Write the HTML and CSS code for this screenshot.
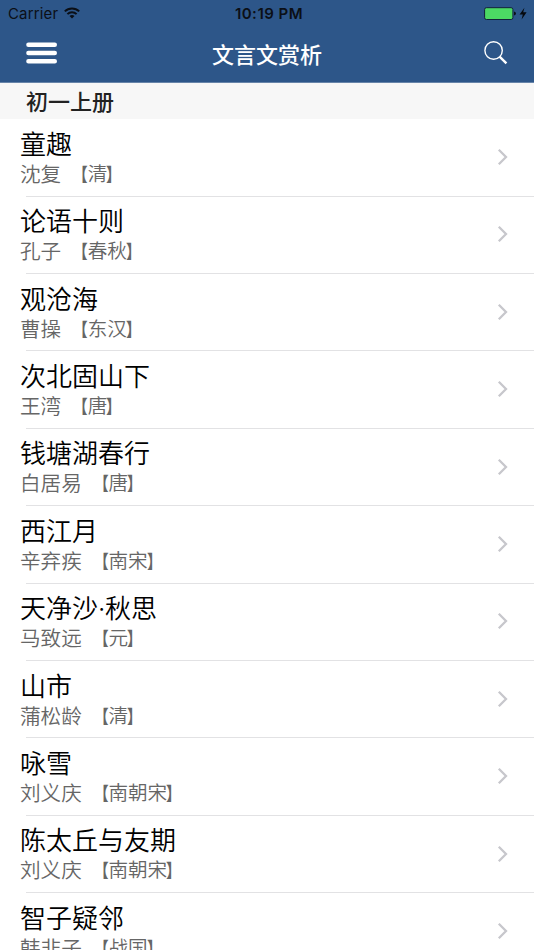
FILE: index.html
```html
<!DOCTYPE html>
<html lang="zh-CN">
<head>
<meta charset="utf-8">
<title>文言文赏析</title>
<link rel="stylesheet" href="styles.css">
</head>
<body>
<header class="header">
  <div class="status">
    <div class="carrier"><span>Carrier</span>
      <svg class="wifi" width="16" height="12" viewBox="0 0 16 12" fill="none" stroke="#0b0f16" stroke-width="2"><path d="M.8 4.4a10.3 10.3 0 0 1 14.4 0M3.4 7.1a6.6 6.6 0 0 1 9.2 0"/><path d="M8 11.6 5.5 9.1a3.6 3.6 0 0 1 5 0Z" fill="#0b0f16" stroke="none"/></svg>
    </div>
    <time class="time">10:19 PM</time>
    <svg class="battery" width="44" height="14" viewBox="0 0 44 14"><rect x=".6" y=".7" width="28.3" height="11.8" rx="1.8" fill="#4cd964" stroke="#12213a"/><path d="M30 4.6q2 .5 2 2t-2 2z" fill="#0b0f16"/><path d="M40.4.8 35.6 7.4h3.2l-1.2 5 5-7.1h-3.4z" fill="#05080d"/></svg>
  </div>
  <nav class="nav">
    <svg class="menu" width="32" height="22" viewBox="0 0 32 22" stroke="#fff" stroke-width="4.4" stroke-linecap="round"><path d="M2.4 2.7h26.4M2.4 11h26.4M2.4 19.3h26.4"/></svg>
    <h1 class="nav-title">文言文赏析</h1>
    <svg class="search" width="24" height="24" viewBox="0 0 24 24" fill="none" stroke="#fff"><circle cx="9.6" cy="9.5" r="8.7" stroke-width="1.4"/><path d="m15.6 15.7 6.8 6.6" stroke-width="2.4"/></svg>
  </nav>
</header>
<h2 class="section">初一上册</h2>
<ul class="list">
  <li class="row"><div class="info"><h3>童趣</h3><p><span class="author">沈复</span><span class="era"><i class="open">【</i>清<i class="close">】</i></span></p></div><svg class="chevron" viewBox="0 0 12 18"><path d="m1.8 1.8 7.2 7.2-7.2 7.2"/></svg></li>
  <li class="row"><div class="info"><h3>论语十则</h3><p><span class="author">孔子</span><span class="era"><i class="open">【</i>春秋<i class="close">】</i></span></p></div><svg class="chevron" viewBox="0 0 12 18"><path d="m1.8 1.8 7.2 7.2-7.2 7.2"/></svg></li>
  <li class="row"><div class="info"><h3>观沧海</h3><p><span class="author">曹操</span><span class="era"><i class="open">【</i>东汉<i class="close">】</i></span></p></div><svg class="chevron" viewBox="0 0 12 18"><path d="m1.8 1.8 7.2 7.2-7.2 7.2"/></svg></li>
  <li class="row"><div class="info"><h3>次北固山下</h3><p><span class="author">王湾</span><span class="era"><i class="open">【</i>唐<i class="close">】</i></span></p></div><svg class="chevron" viewBox="0 0 12 18"><path d="m1.8 1.8 7.2 7.2-7.2 7.2"/></svg></li>
  <li class="row"><div class="info"><h3>钱塘湖春行</h3><p><span class="author">白居易</span><span class="era"><i class="open">【</i>唐<i class="close">】</i></span></p></div><svg class="chevron" viewBox="0 0 12 18"><path d="m1.8 1.8 7.2 7.2-7.2 7.2"/></svg></li>
  <li class="row"><div class="info"><h3>西江月</h3><p><span class="author">辛弃疾</span><span class="era"><i class="open">【</i>南宋<i class="close">】</i></span></p></div><svg class="chevron" viewBox="0 0 12 18"><path d="m1.8 1.8 7.2 7.2-7.2 7.2"/></svg></li>
  <li class="row"><div class="info"><h3>天净沙<span class="dot">·</span>秋思</h3><p><span class="author">马致远</span><span class="era"><i class="open">【</i>元<i class="close">】</i></span></p></div><svg class="chevron" viewBox="0 0 12 18"><path d="m1.8 1.8 7.2 7.2-7.2 7.2"/></svg></li>
  <li class="row"><div class="info"><h3>山市</h3><p><span class="author">蒲松龄</span><span class="era"><i class="open">【</i>清<i class="close">】</i></span></p></div><svg class="chevron" viewBox="0 0 12 18"><path d="m1.8 1.8 7.2 7.2-7.2 7.2"/></svg></li>
  <li class="row"><div class="info"><h3>咏雪</h3><p><span class="author">刘义庆</span><span class="era"><i class="open">【</i>南朝宋<i class="close">】</i></span></p></div><svg class="chevron" viewBox="0 0 12 18"><path d="m1.8 1.8 7.2 7.2-7.2 7.2"/></svg></li>
  <li class="row"><div class="info"><h3>陈太丘与友期</h3><p><span class="author">刘义庆</span><span class="era"><i class="open">【</i>南朝宋<i class="close">】</i></span></p></div><svg class="chevron" viewBox="0 0 12 18"><path d="m1.8 1.8 7.2 7.2-7.2 7.2"/></svg></li>
  <li class="row"><div class="info"><h3>智子疑邻</h3><p><span class="author">韩非子</span><span class="era"><i class="open">【</i>战国<i class="close">】</i></span></p></div><svg class="chevron" viewBox="0 0 12 18"><path d="m1.8 1.8 7.2 7.2-7.2 7.2"/></svg></li>
</ul>
</body>
</html>
```
FILE: styles.css
```css
* { box-sizing: border-box; margin: 0; padding: 0; }
html, body { height: 100%; overflow: hidden; }
body {
  display: flex;
  flex-direction: column;
  background: #fff;
  color: #000;
  font-family: Inter, "Noto Sans CJK SC", sans-serif;
}
.header { flex: none; height: 83px; background: #2d5689; border-bottom: 1px solid #6784a9; }
.status {
  display: grid;
  grid-template-columns: 1fr auto 1fr;
  align-items: center;
  height: 27px;
  padding: 0 6px 0 8px;
  color: #0b0f16;
  font-size: 15px;
}
.carrier { display: flex; align-items: center; gap: 6px; letter-spacing: .15px; }
.wifi { margin-top: -1px; }
.time { margin-left: 2px; font-weight: 600; letter-spacing: .5px; }
.battery { justify-self: end; }
.nav {
  display: grid;
  grid-template-columns: 1fr auto 1fr;
  align-items: center;
  height: 52px;
  padding: 0 26px;
  color: #fff;
}
.nav-title { font-size: 22px; font-weight: 500; line-height: 30px; margin-top: 4px; }
.search { justify-self: end; }
.section {
  flex: none;
  height: 36px;
  padding-left: 26px;
  background: #f7f7f7;
  color: #222;
  font-size: 22px;
  font-weight: 500;
  line-height: 38px;
}
.list { flex: none; list-style: none; padding-top: .3px; }
.row {
  display: flex;
  justify-content: space-between;
  height: 77.4px;
  padding: 7.5px 25px 0 20px;
  background: linear-gradient(#e2e2e4, #e2e2e4) 26px 100% / 100% 1px no-repeat;
}
h3 { font-size: 26px; font-weight: 350; line-height: 36px; }
.dot { display: inline-block; width: 7px; text-align: center; }
.info p { display: flex; gap: 7px; line-height: 24px; color: #666; }
.author { font-size: 20.6px; font-weight: 350; }
.era { margin-top: -1px; font-size: 19.6px; font-weight: 350; }
.open, .close { display: inline-block; font-style: normal; font-weight: 700; }
.open { transform: scale(.76, .93); transform-origin: right; }
.close { transform: translateX(-1px) scale(.76, .93); transform-origin: left; }
.chevron {
  width: 12px;
  height: 18px;
  margin-top: 21.2px;
  fill: none;
  stroke: #c7c7cc;
  stroke-width: 2.3;
}
```
